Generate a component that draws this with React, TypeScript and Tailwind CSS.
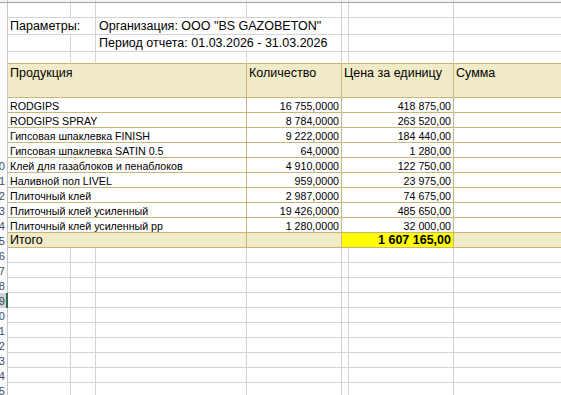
import React from 'react';

const GRID = 'border-[#d4d4d4]';
const TAN = 'border-[#c8b679]';

type Row = { name: string; qty: string; price: string };

const rows: Row[] = [
  { name: 'RODGIPS', qty: '16 755,0000', price: '418 875,00' },
  { name: 'RODGIPS SPRAY', qty: '8 784,0000', price: '263 520,00' },
  { name: 'Гипсовая шпаклевка FINISH', qty: '9 222,0000', price: '184 440,00' },
  { name: 'Гипсовая шпаклевка SATIN 0.5', qty: '64,0000', price: '1 280,00' },
  { name: 'Клей для газаблоков и пенаблоков', qty: '4 910,0000', price: '122 750,00' },
  { name: 'Наливной пол LIVEL', qty: '959,0000', price: '23 975,00' },
  { name: 'Плиточный клей', qty: '2 987,0000', price: '74 675,00' },
  { name: 'Плиточный клей усиленный', qty: '19 426,0000', price: '485 650,00' },
  { name: 'Плиточный клей усиленный рр', qty: '1 280,0000', price: '32 000,00' },
];

// row numbers: the header column is scrolled mostly out of view,
// so only the right part of the last digit of two-digit numbers shows
const RowHead: React.FC<{ n?: number; selected?: boolean }> = ({ n, selected }) => (
  <div
    className={`w-[8px] h-full shrink-0 overflow-hidden flex items-end justify-end text-[11px] leading-[13px] text-[#3d4f6b] whitespace-nowrap ${
      selected ? 'bg-[#d2d2d2] border-r-2 border-[#217346]' : 'bg-[#fbfbfb] border-r border-[#c6c6c6]'
    }`}
  >
    {n !== undefined && n >= 10 && <span className={selected ? 'pr-[1px]' : 'pr-[2px]'}>{n}</span>}
  </div>
);

const EmptyRow: React.FC<{ n: number; selected?: boolean }> = ({ n, selected }) => (
  <div className="flex h-[15px]">
    <RowHead n={n} selected={selected} />
    <div className={`w-[63px] shrink-0 border-r border-b ${GRID}`} />
    <div className={`w-[25px] shrink-0 border-r border-b ${GRID}`} />
    <div className={`w-[151px] shrink-0 border-r border-b ${GRID}`} />
    <div className={`w-[95px] shrink-0 border-r border-b ${GRID}`} />
    <div className={`w-[7px] shrink-0 border-r border-b ${GRID}`} />
    <div className={`w-[105px] shrink-0 border-r border-b ${GRID}`} />
    <div className={`w-[140px] shrink-0 border-r border-b ${GRID}`} />
  </div>
);

export default function App() {
  return (
    <div className="w-[561px] h-[395px] overflow-hidden bg-white text-black font-['Liberation_Sans',Arial,sans-serif]">
      {/* column header edge */}
      <div className="flex h-[3px] bg-[#f3f3f3] border-b border-[#a3a3a3]">
        <div className="w-[8px] shrink-0 border-r border-[#c6c6c6]" />
        <div className={`w-[63px] shrink-0 border-r ${GRID}`} />
        <div className={`w-[25px] shrink-0 border-r ${GRID}`} />
        <div className={`w-[151px] shrink-0 border-r ${GRID}`} />
        <div className={`w-[95px] shrink-0 border-r ${GRID}`} />
        <div className={`w-[7px] shrink-0 border-r ${GRID}`} />
        <div className={`w-[105px] shrink-0 border-r ${GRID}`} />
      </div>

      {/* row 1 */}
      <EmptyRow n={1} />

      {/* row 2 */}
      <div className="flex h-[17px] text-[12.5px] leading-[15px]">
        <RowHead n={2} />
        <div className={`w-[88px] shrink-0 border-r border-b ${GRID} flex items-end pl-[2px] whitespace-nowrap`}>
          Параметры:
        </div>
        <div className={`w-[246px] shrink-0 border-r border-b ${GRID} flex items-end pl-[3px] whitespace-nowrap`}>
          Организация: ООО "BS GAZOBETON"
        </div>
        <div className={`w-[7px] shrink-0 border-r border-b ${GRID}`} />
        <div className={`w-[105px] shrink-0 border-r border-b ${GRID}`} />
        <div className={`w-[140px] shrink-0 border-r border-b ${GRID}`} />
      </div>

      {/* row 3 */}
      <div className="flex h-[17px] text-[12.5px] leading-[15px]">
        <RowHead n={3} />
        <div className={`w-[63px] shrink-0 border-r border-b ${GRID}`} />
        <div className={`w-[25px] shrink-0 border-r border-b ${GRID}`} />
        <div className={`w-[246px] shrink-0 border-r border-b ${GRID} flex items-end pl-[3px] whitespace-nowrap`}>
          Период отчета: 01.03.2026 - 31.03.2026
        </div>
        <div className={`w-[7px] shrink-0 border-r border-b ${GRID}`} />
        <div className={`w-[105px] shrink-0 border-r border-b ${GRID}`} />
        <div className={`w-[140px] shrink-0 border-r border-b ${GRID}`} />
      </div>

      {/* row 4 */}
      <div className="flex h-[12px]">
        <RowHead n={4} />
        <div className={`w-[63px] shrink-0 border-r ${GRID} border-b border-b-[#c8b679]`} />
        <div className={`w-[25px] shrink-0 border-r ${GRID} border-b border-b-[#c8b679]`} />
        <div className={`w-[151px] shrink-0 border-r ${GRID} border-b border-b-[#c8b679]`} />
        <div className={`w-[95px] shrink-0 border-r ${GRID} border-b border-b-[#c8b679]`} />
        <div className={`w-[7px] shrink-0 border-r ${GRID} border-b border-b-[#c8b679]`} />
        <div className={`w-[105px] shrink-0 border-r ${GRID} border-b border-b-[#c8b679]`} />
        <div className={`w-[140px] shrink-0 border-b border-b-[#c8b679]`} />
      </div>

      {/* header row */}
      <div className="flex h-[34px] text-[12.5px] leading-[15px] bg-[#f2ebc8]">
        <RowHead n={5} />
        <div className={`w-[239px] shrink-0 border-r border-b ${TAN} pl-[2px] pt-[2px]`}>Продукция</div>
        <div className={`w-[95px] shrink-0 border-r border-b ${TAN} pl-[2px] pt-[2px]`}>Количество</div>
        <div className={`w-[112px] shrink-0 border-r border-b ${TAN} pl-[2px] pt-[2px]`}>Цена за единицу</div>
        <div className={`w-[140px] shrink-0 border-r border-b ${TAN} pl-[2px] pt-[2px]`}>Сумма</div>
      </div>

      {/* data rows */}
      {rows.map((r, i) => (
        <div key={r.name} className="flex h-[15px] text-[10.67px] leading-[12px]">
          <RowHead n={6 + i} />
          <div className={`w-[239px] shrink-0 border-r border-b ${TAN} flex items-end pl-[2px] whitespace-nowrap`}>
            {r.name}
          </div>
          <div className={`w-[95px] shrink-0 border-r border-b ${TAN} flex items-end justify-end pr-[2px]`}>
            {r.qty}
          </div>
          <div className={`w-[112px] shrink-0 border-r border-b ${TAN} flex items-end justify-end pr-[2px]`}>
            {r.price}
          </div>
          <div className={`w-[140px] shrink-0 border-r border-b ${TAN}`} />
        </div>
      ))}

      {/* total row */}
      <div className="flex h-[15px] text-[12.5px] leading-[14px] bg-[#f2ebc8]">
        <RowHead n={15} />
        <div className={`w-[239px] shrink-0 border-r border-b ${TAN} flex items-end pl-[2px]`}>Итого</div>
        <div className={`w-[95px] shrink-0 border-r border-b ${TAN}`} />
        <div className={`w-[112px] shrink-0 border-r border-b ${TAN} bg-[#ffff00] flex items-end justify-end pr-[2px] font-bold`}>
          1 607 165,00
        </div>
        <div className={`w-[140px] shrink-0 border-r border-b ${TAN}`} />
      </div>

      {/* empty rows */}
      {[16, 17, 18, 19, 20, 21, 22, 23, 24, 25].map(n => (
        <EmptyRow key={n} n={n} selected={n === 19} />
      ))}
    </div>
  );
}
